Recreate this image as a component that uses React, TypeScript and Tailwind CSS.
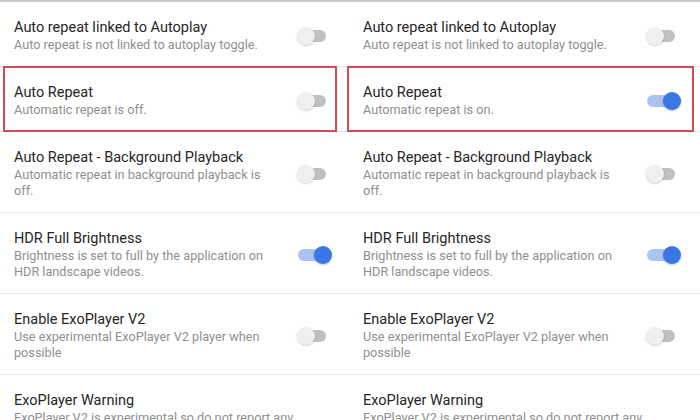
import React from "react";

type Item = { title: string; desc: string[]; on?: boolean; boxed?: boolean };

const left: Item[] = [
  { title: "Auto repeat linked to Autoplay", desc: ["Auto repeat is not linked to autoplay toggle."], on: false },
  { title: "Auto Repeat", desc: ["Automatic repeat is off."], on: false, boxed: true },
  { title: "Auto Repeat - Background Playback", desc: ["Automatic repeat in background playback is", "off."], on: false },
  { title: "HDR Full Brightness", desc: ["Brightness is set to full by the application on", "HDR landscape videos."], on: true },
  { title: "Enable ExoPlayer V2", desc: ["Use experimental ExoPlayer V2 player when", "possible"], on: false },
  { title: "ExoPlayer Warning", desc: ["ExoPlayer V2 is experimental so do not report any", "issues."] },
];

const right: Item[] = left.map((it, i) =>
  i === 1 ? { ...it, desc: ["Automatic repeat is on."], on: true } : it
);

function Toggle({ on }: { on: boolean }) {
  return (
    <div className={on ? "flex h-[20px] w-[35px] shrink-0 items-center justify-end" : "flex h-[20px] w-[35px] shrink-0 items-center"}>
      {on ? (
        <>
          <div className="-mr-[8px] h-[12px] w-[24px] rounded-full bg-[#aac3f3]" />
          <div className="relative h-[18px] w-[18px] rounded-full bg-[#3a77e4] shadow-[0_1px_2px_rgba(0,0,0,0.25)]" />
        </>
      ) : (
        <>
          <div className="relative z-10 h-[18px] w-[18px] rounded-full bg-[#efefef] shadow-[0_1px_2px_rgba(0,0,0,0.18)]" />
          <div className="-ml-[15px] h-[12px] w-[26px] rounded-full bg-[#c0c0c0]" />
        </>
      )}
    </div>
  );
}

function Column({ items, side }: { items: Item[]; side: "l" | "r" }) {
  return (
    <div className={side === "l" ? "w-[349px]" : "w-[351px]"}>
      {items.map((it) => (
        <div
          key={it.title}
          className="relative flex items-center border-b border-[#e6e6e6] pb-[13px] pl-[14px] pt-[16px]"
        >
          <div className="w-[283px]">
            <div className="text-[14.5px] leading-[19px] text-[#262626]">{it.title}</div>
            <div className="whitespace-nowrap text-[12.7px] leading-[16px] text-[#8f8f8f]">
              {it.desc.map((line) => (
                <div key={line}>{line}</div>
              ))}
            </div>
          </div>
          {it.on !== undefined && <Toggle on={it.on} />}
          {it.boxed && (
            <div
              className={
                side === "l"
                  ? "absolute -bottom-px -top-px left-[3px] right-[12px] border-2 border-[#d24a55]"
                  : "absolute -bottom-px -top-px -left-[2px] right-[6px] border-2 border-[#d24a55]"
              }
            />
          )}
        </div>
      ))}
    </div>
  );
}

export default function App() {
  return (
    <main
      className="h-[420px] w-[700px] overflow-hidden bg-white"
      style={{ fontFamily: "Roboto, 'Noto Sans', sans-serif" }}
    >
      <div className="h-[2px] bg-[#c9c9c9]" />
      <div className="flex">
        <Column items={left} side="l" />
        <Column items={right} side="r" />
      </div>
    </main>
  );
}
